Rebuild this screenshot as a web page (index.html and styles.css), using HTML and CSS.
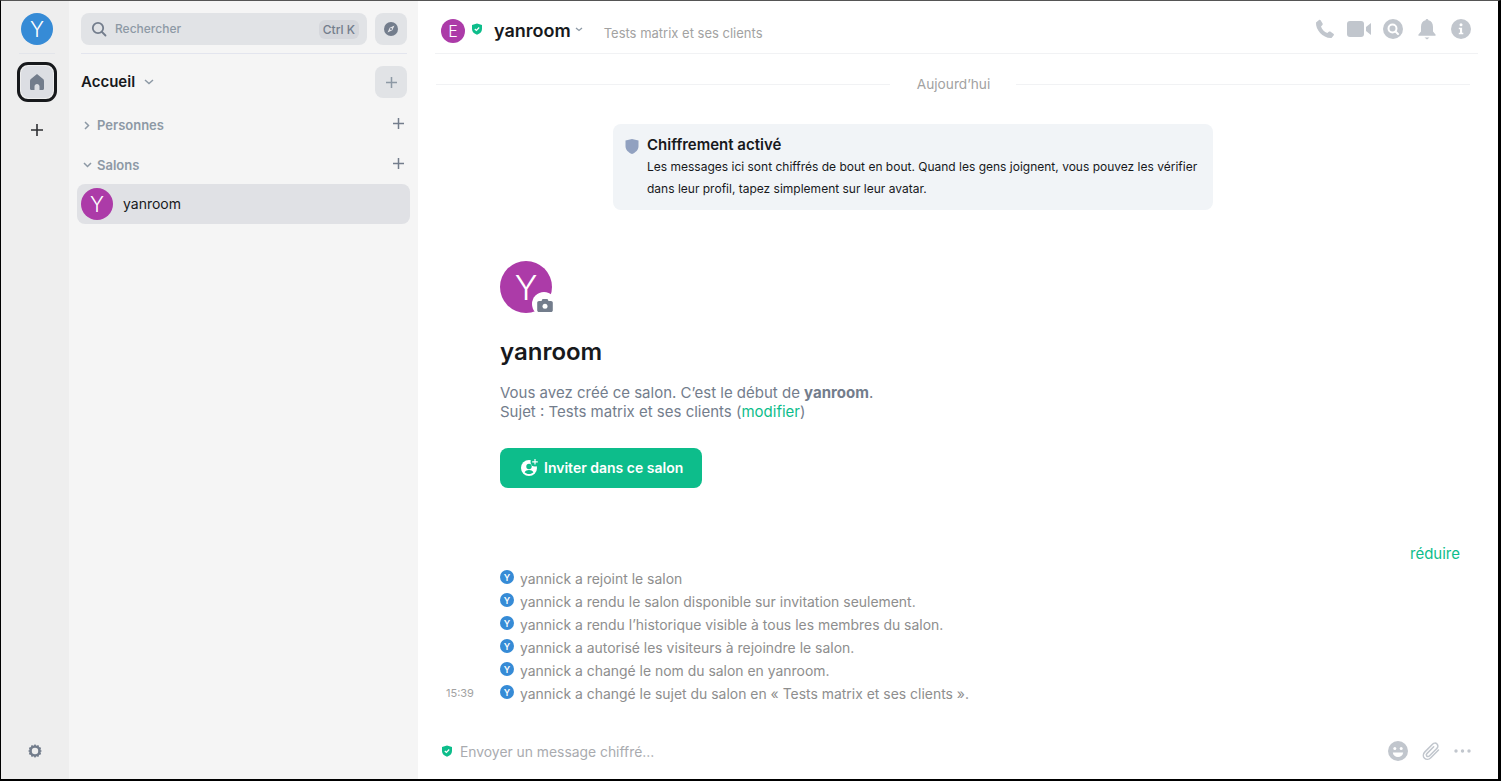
FILE: index.html
```html
<!DOCTYPE html>
<html lang="fr">
<head>
    <meta charset="UTF-8">
    <title>Element | yanroom</title>
    <link rel="stylesheet" href="styles.css">
</head>
<body>
<div class="app">
    <nav class="rail">
        <div class="avatar avatar-blue avatar-32 rail-me">Y</div>
        <div class="rail-sep"></div>
        <div class="rail-home">
            <div class="rail-home-inner">
                <svg width="14" height="16" viewBox="0 0 14 16"><path d="M7 0 .9 5C.3 5.500 0 6.100 0 6.900V14.500c0 .8.6 1.500 1.400 1.500H4.500v-3.500C4.500 11.100 5.600 10 7 10s2.500 1.100 2.500 2.500V16h3.100c.8 0 1.400-.7 1.400-1.500V6.900c0-.8-.3-1.400-.9-1.900z" fill="#737d8c"/></svg>
            </div>
        </div>
        <svg class="rail-add" width="14" height="14" viewBox="0 0 14 14"><path d="M7 1v12M1 7h12" stroke="#2e2f32" stroke-width="1.600"/></svg>
        <svg class="rail-gear" width="16" height="16" viewBox="0 0 16 16"><path d="M8 1l1.300 1.700 2.100-.6.700 2 2 .7-.6 2.100L15 8l-1.500 1.100.6 2.100-2 .7-.7 2-2.100-.6L8 15l-1.300-1.700-2.100.6-.7-2-2-.7.6-2.100L1 8l1.500-1.100-.6-2.100 2-.7.7-2 2.100.6z" fill="#737d8c"/><circle cx="8" cy="8" r="3.200" fill="#eeeeee"/></svg>
    </nav>

    <aside class="side">
        <div class="side-top">
            <div class="search">
                <svg width="16" height="16" viewBox="0 0 16 16"><circle cx="7" cy="7" r="5.200" fill="none" stroke="#737d8c" stroke-width="1.800"/><path d="M11 11l3.500 3.500" stroke="#737d8c" stroke-width="1.800" stroke-linecap="round"/></svg>
                <span class="search-label">Rechercher</span>
                <span class="kbd">Ctrl K</span>
            </div>
            <div class="square-btn">
                <svg width="14" height="14" viewBox="0 0 14 14"><circle cx="7" cy="7" r="7" fill="#737d8c"/><path d="M10.500 3.500 8.300 8.300 3.500 10.500 5.700 5.700z" fill="#e3e4e8"/><circle cx="7" cy="7" r="1" fill="#737d8c"/></svg>
            </div>
        </div>
        <div class="side-sep"></div>
        <div class="home-head">
            <span class="home-title">Accueil</span>
            <svg class="home-caret" width="10" height="6" viewBox="0 0 10 6"><path d="M1 1l4 3.500L9 1" fill="none" stroke="#8d99a5" stroke-width="1.500"/></svg>
            <div class="square-btn home-add">
                <svg width="11" height="11" viewBox="0 0 11 11"><path d="M5.500 0v11M0 5.500h11" stroke="#8d99a5" stroke-width="1.500"/></svg>
            </div>
        </div>
        <div class="section section-people">
            <svg width="6" height="9" viewBox="0 0 6 9"><path d="M1 1l3.500 3.500L1 8" fill="none" stroke="#8d99a5" stroke-width="1.500"/></svg>
            <span class="section-name">Personnes</span>
            <svg class="section-add" width="11" height="11" viewBox="0 0 11 11"><path d="M5.500 0v11M0 5.500h11" stroke="#737d8c" stroke-width="1.500"/></svg>
        </div>
        <div class="section section-rooms">
            <svg width="9" height="6" viewBox="0 0 9 6"><path d="M1 1l3.500 3.500L8 1" fill="none" stroke="#8d99a5" stroke-width="1.500"/></svg>
            <span class="section-name">Salons</span>
            <svg class="section-add" width="11" height="11" viewBox="0 0 11 11"><path d="M5.500 0v11M0 5.500h11" stroke="#737d8c" stroke-width="1.500"/></svg>
        </div>
        <div class="room-row">
            <div class="avatar avatar-purple avatar-32">Y</div>
            <span class="room-name">yanroom</span>
        </div>
    </aside>

    <main class="main">
        <header class="head">
            <div class="avatar avatar-purple avatar-24">E</div>
            <svg class="head-shield" width="12" height="12" viewBox="0 0 12 12"><path d="M6 .5 11 2v4c0 3-2.300 4.800-5 5.700C3.300 10.800 1 9 1 6V2z" fill="#0dbd8b"/><path d="M3.800 6l1.600 1.500 2.800-3" fill="none" stroke="#fff" stroke-width="1.200"/></svg>
            <span class="head-name">yanroom</span>
            <svg class="head-caret" width="8" height="5" viewBox="0 0 8 5"><path d="M1 1l3 2.500L7 1" fill="none" stroke="#8d99a5" stroke-width="1.300"/></svg>
            <span class="head-topic">Tests matrix et ses clients</span>
            <div class="head-icons">
                <svg width="20" height="20" viewBox="0 0 20 20"><path d="M1 3.500 4 1c.6-.4 1.200-.3 1.600.3l2 3.300c.3.500.2 1-.2 1.400L6 7.400c.8 2.700 3.400 5.500 6.300 6.700l1.500-1.400c.4-.4 1-.4 1.500-.1l3.100 2.200c.6.400.7 1.100.2 1.700L16.500 19C8 19.500 .5 11 1 3.500z" fill="#c1c6cd"/></svg>
                <svg width="24" height="16" viewBox="0 0 24 16"><rect x="0" y="0" width="17" height="16" rx="3" fill="#c1c6cd"/><path d="M19 6 24 2v12l-5-4z" fill="#c1c6cd"/></svg>
                <svg width="20" height="20" viewBox="0 0 20 20"><circle cx="10" cy="10" r="10" fill="#c1c6cd"/><circle cx="9.500" cy="9.500" r="4" fill="none" stroke="#fff" stroke-width="2"/><path d="M12.500 12.500 15 15" stroke="#fff" stroke-width="2" stroke-linecap="round"/></svg>
                <svg class="head-bell" width="18" height="21" viewBox="0 0 18 21"><path d="M9 0c.8 0 1.400.6 1.400 1.300C13.500 2 15 4.500 15 8v4.500l2.500 3c.4.500.1 1.300-.6 1.300H1.100c-.7 0-1-.8-.6-1.300l2.500-3V8c0-3.500 1.500-6 4.600-6.700C7.600.6 8.200 0 9 0z" fill="#c1c6cd"/><path d="M6.500 18.500h5L9 20.500z" fill="#c1c6cd"/></svg>
                <svg width="20" height="20" viewBox="0 0 20 20"><circle cx="10" cy="10" r="10" fill="#c1c6cd"/><circle cx="10" cy="5.800" r="1.500" fill="#fff"/><path d="M7.800 8.800h3.300v5h1.200v1.500H7.800v-1.500H9v-3.500H7.800z" fill="#fff"/></svg>
            </div>
        </header>

        <div class="timeline">
            <div class="date-sep">
                <span class="date-line"></span>
                <span class="date-text">Aujourd’hui</span>
                <span class="date-line"></span>
            </div>

            <div class="notice">
                <svg class="notice-shield" width="14" height="15" viewBox="0 0 14 15"><path d="M7 0 13.500 1.600V7c0 4-2.900 6.500-6.500 8C3.400 13.500.5 11 .5 7V1.600z" fill="#91a1c0"/></svg>
                <div>
                    <div class="notice-title">Chiffrement activé</div>
                    <div class="notice-text">Les messages ici sont chiffrés de bout en bout. Quand les gens joignent, vous pouvez les vérifier dans leur profil, tapez simplement sur leur avatar.</div>
                </div>
            </div>

            <section class="intro">
                <div class="intro-avatar">
                    <div class="avatar avatar-purple avatar-52">Y</div>
                    <div class="camera">
                        <svg width="16" height="13" viewBox="0 0 16 13"><path d="M5.500 0h5l1 2H14c1 0 1.800.8 1.800 1.800v7.400c0 1-.8 1.800-1.800 1.800H2c-1 0-1.800-.8-1.800-1.800V3.800C.2 2.800 1 2 2 2h2.500z" fill="#737d8c"/><circle cx="8" cy="7.300" r="2.500" fill="#fff"/></svg>
                    </div>
                </div>
                <h1 class="intro-name">yanroom</h1>
                <p class="intro-text">Vous avez créé ce salon. C’est le début de <b>yanroom</b>.<br>Sujet : Tests matrix et ses clients (<a class="link">modifier</a>)</p>
                <button class="invite">
                    <svg width="18" height="18" viewBox="0 0 18 18"><circle cx="8" cy="10" r="8" fill="#fff"/><circle cx="14" cy="4" r="4.500" fill="#0dbd8b"/><path d="M14 1v5.600M11.200 3.800h5.600" stroke="#fff" stroke-width="1.200"/><circle cx="8" cy="8.500" r="2.700" fill="#0dbd8b"/><path d="M3.600 14.200c.9-1.500 2.500-2.300 4.400-2.300s3.500.8 4.400 2.300c-1.100 1.100-2.700 1.800-4.400 1.800s-3.300-.7-4.400-1.800z" fill="#0dbd8b"/></svg>
                    Inviter dans ce salon
                </button>
            </section>

            <div class="collapse"><a class="link">réduire</a></div>

            <ul class="events">
                <li class="event"><span class="event-time"></span><span class="avatar avatar-blue avatar-14">Y</span><span>yannick a rejoint le salon</span></li>
                <li class="event"><span class="event-time"></span><span class="avatar avatar-blue avatar-14">Y</span><span>yannick a rendu le salon disponible sur invitation seulement.</span></li>
                <li class="event"><span class="event-time"></span><span class="avatar avatar-blue avatar-14">Y</span><span>yannick a rendu l’historique visible à tous les membres du salon.</span></li>
                <li class="event"><span class="event-time"></span><span class="avatar avatar-blue avatar-14">Y</span><span>yannick a autorisé les visiteurs à rejoindre le salon.</span></li>
                <li class="event"><span class="event-time"></span><span class="avatar avatar-blue avatar-14">Y</span><span>yannick a changé le nom du salon en yanroom.</span></li>
                <li class="event"><span class="event-time">15:39</span><span class="avatar avatar-blue avatar-14">Y</span><span>yannick a changé le sujet du salon en « Tests matrix et ses clients ».</span></li>
            </ul>
        </div>

        <footer class="composer">
            <svg width="12" height="12" viewBox="0 0 12 12"><path d="M6 .5 11 2v4c0 3-2.300 4.800-5 5.700C3.300 10.800 1 9 1 6V2z" fill="#0dbd8b"/><path d="M3.800 6l1.600 1.500 2.800-3" fill="none" stroke="#fff" stroke-width="1.200"/></svg>
            <span class="composer-text">Envoyer un message chiffré…</span>
            <div class="composer-icons">
                <svg width="20" height="20" viewBox="0 0 20 20"><circle cx="10" cy="10" r="10" fill="#c1c6cd"/><circle cx="6.800" cy="7.500" r="1.500" fill="#fff"/><circle cx="13.200" cy="7.500" r="1.500" fill="#fff"/><path d="M4.800 11.500h10.400c-.3 2.800-2.500 4.500-5.200 4.500s-4.900-1.700-5.200-4.500z" fill="#fff"/></svg>
                <svg width="20" height="20" viewBox="0 0 20 20"><path d="M17.500 9 9.800 16.800c-2 2-4.700 2-6.300.4s-1.600-4.300.4-6.300L11.500 3.200c1.400-1.400 3.300-1.400 4.500-.2s1.200 3.100-.2 4.500L8.300 15c-.7.700-1.800.8-2.500.1s-.6-1.800.1-2.500l6.800-6.800" fill="none" stroke="#c1c6cd" stroke-width="1.500" stroke-linecap="round"/></svg>
                <svg width="17" height="4" viewBox="0 0 17 4"><circle cx="2" cy="2" r="1.700" fill="#c1c6cd"/><circle cx="8.500" cy="2" r="1.700" fill="#c1c6cd"/><circle cx="15" cy="2" r="1.700" fill="#c1c6cd"/></svg>
            </div>
        </footer>
    </main>
</div>
</body>
</html>
```

FILE: styles.css
```css
* {
    box-sizing: border-box;
}

html, body {
    height: 100%;
}

body {
    margin: 0;
    font-family: Inter, 'Noto Sans', sans-serif;
    background-color: #fff;
    color: #17191c;
    overflow: hidden;
}

.app {
    display: flex;
    height: 781px;
    border-top: 1px solid #555;
    border-left: 1px solid #000;
    border-right: 3px solid #000;
    border-bottom: 2px solid #000;
}

.avatar {
    display: flex;
    align-items: center;
    justify-content: center;
    flex-shrink: 0;
    border-radius: 50%;
    color: #fff;
    font-weight: 300;
}

.avatar-blue {
    background-color: #368bd6;
}

.avatar-purple {
    background-color: #ac3ba8;
}

.avatar-32 {
    width: 32px;
    height: 32px;
    font-size: 21px;
}

.avatar-24 {
    width: 24px;
    height: 24px;
    font-size: 16px;
}

.avatar-52 {
    width: 52px;
    height: 52px;
    font-size: 34px;
}

.avatar-14 {
    width: 14px;
    height: 14px;
    font-size: 9px;
    font-weight: 600;
    margin-top: -3px;
}

/* rail */
.rail {
    width: 68px;
    flex-shrink: 0;
    display: flex;
    flex-direction: column;
    align-items: center;
    background-color: #eeeeee;
    position: relative;
    padding-top: 12px;
    padding-left: 4px;
}

.rail-me {
    margin-bottom: 8px;
}

.rail-sep {
    width: 36px;
    height: 1px;
    background-color: #e3e5ea;
}

.rail-home {
    width: 40px;
    height: 40px;
    margin-top: 8px;
    border: 3px solid #17191c;
    border-radius: 11px;
    background-color: #eeeeee;
    display: flex;
    align-items: center;
    justify-content: center;
}

.rail-home-inner {
    width: 32px;
    height: 32px;
    border-radius: 8px;
    background-color: #dcdee3;
    display: flex;
    align-items: center;
    justify-content: center;
}

.rail-add {
    margin-top: 21px;
}

.rail-gear {
    position: absolute;
    left: 26px;
    bottom: 20px;
}

/* room list */
.side {
    width: 349px;
    flex-shrink: 0;
    background-color: #f5f5f5;
    padding: 12px 8px 0 12px;
}

.side-top {
    display: flex;
    gap: 8px;
    width: 326px;
}

.search {
    flex: 1;
    height: 32px;
    border-radius: 8px;
    background-color: #e1e3e6;
    display: flex;
    align-items: center;
    padding: 0 8px 0 10px;
}

.search-label {
    margin-left: 8px;
    margin-top: -2px;
    font-size: 12px;
    font-weight: 500;
    color: #8d99a5;
}

.kbd {
    margin-left: auto;
    padding: 2px 4px;
    height: 19px;
    border-radius: 6px;
    background-color: #d5d7dc;
    font-size: 12px;
    font-weight: 500;
    line-height: 15px;
    color: #737d8c;
}

.square-btn {
    width: 32px;
    height: 32px;
    flex-shrink: 0;
    border-radius: 8px;
    background-color: #e1e3e6;
    display: flex;
    align-items: center;
    justify-content: center;
}

.side-sep {
    height: 1px;
    margin-top: 8px;
    width: 326px;
    background-color: #e3e5ee;
}

.home-head {
    display: flex;
    align-items: center;
    width: 326px;
    margin-top: 12px;
}

.home-title {
    font-size: 15px;
    font-weight: 600;
    line-height: 32px;
    color: #17191c;
}

.home-caret {
    margin-left: 9px;
}

.home-add {
    margin-left: auto;
}

.section {
    display: flex;
    align-items: center;
    height: 20px;
    width: 323px;
    padding-left: 2px;
}

.section-people {
    margin-top: 17px;
}

.section-rooms {
    margin-top: 20px;
}

.section-people svg:first-child {
    margin-left: 1px;
    margin-right: 1px;
}

.section-name {
    margin-left: 6px;
    font-size: 13px;
    font-weight: 600;
    color: #8d99a5;
}

.section-rooms .section-name {
    margin-left: 5px;
}

.section-add {
    margin-left: auto;
    margin-top: -3px;
}

.room-row {
    display: flex;
    align-items: center;
    height: 40px;
    width: 333px;
    margin-top: 9px;
    margin-left: -4px;
    padding-left: 4px;
    border-radius: 8px;
    background-color: #e0e1e5;
}

.room-name {
    margin-left: 10px;
    margin-top: -2px;
    font-size: 14px;
    color: #17191c;
}

/* main */
.main {
    flex: 1;
    min-width: 0;
    display: flex;
    flex-direction: column;
    background-color: #fff;
}

.head {
    display: flex;
    align-items: center;
    height: 53px;
    margin-left: 17px;
    margin-right: 20px;
    padding-left: 6px;
    padding-top: 7px;
    border-bottom: 1px solid #f1f2f4;
}

.head-shield {
    margin-left: 6px;
    margin-top: -3px;
}

.head-name {
    margin-left: 11px;
    font-size: 18px;
    font-weight: 600;
    color: #17191c;
}

.head-caret {
    margin-left: 4px;
    margin-top: -3px;
}

.head-topic {
    margin-left: 21px;
    margin-top: 5px;
    font-size: 13px;
    color: #a2a2a2;
}

.head-icons {
    margin-left: auto;
    display: flex;
    align-items: center;
    gap: 12px;
    margin-right: 7px;
    margin-top: -3px;
}

.head-bell {
    margin: 0 3px;
}

.timeline {
    flex: 1;
    min-height: 0;
    padding-left: 18px;
    padding-right: 20px;
}

.date-sep {
    display: flex;
    align-items: center;
    height: 30px;
    margin-top: 15px;
    margin-right: 8px;
}

.date-line {
    flex: 1;
    height: 1px;
    background-color: #f1f2f4;
}

.date-text {
    padding: 0 26px 0 27px;
    font-size: 13.7px;
    color: #a2a2a2;
}

.notice {
    display: flex;
    gap: 8px;
    width: 600px;
    height: 86px;
    margin-top: 25px;
    margin-left: 177px;
    padding: 12px 12px;
    border-radius: 8px;
    background-color: #f1f4f7;
}

.notice-shield {
    margin-top: 3px;
    flex-shrink: 0;
}

.notice-title {
    font-size: 15px;
    font-weight: 600;
    line-height: 18px;
    color: #17191c;
}

.notice-text {
    font-size: 12px;
    line-height: 22px;
    margin-top: 2px;
    color: #17191c;
}

.intro {
    margin-left: 64px;
    margin-top: 51px;
}

.intro-avatar {
    position: relative;
    width: 52px;
    height: 52px;
}

.camera {
    position: absolute;
    right: -4px;
    bottom: -3px;
    width: 24px;
    height: 24px;
    border-radius: 50%;
    background-color: #fff;
    display: flex;
    align-items: center;
    justify-content: center;
    padding-left: 1px;
    padding-top: 2px;
}

.intro-name {
    margin: 24px 0 0;
    font-size: 24px;
    font-weight: 600;
    line-height: 29px;
    color: #17191c;
}

.intro-text {
    margin: 17px 0 0;
    font-size: 15px;
    line-height: 19px;
    color: #737d8c;
}

.link {
    color: #0dbd8b;
}

.invite {
    display: flex;
    align-items: center;
    gap: 5px;
    width: 202px;
    height: 40px;
    margin-top: 27px;
    padding: 0 0 2px 21px;
    border: none;
    border-radius: 8px;
    background-color: #0dbd8b;
    color: #fff;
    font-family: inherit;
    font-size: 14px;
    font-weight: 600;
}

.collapse {
    margin-top: 57px;
    text-align: right;
    font-size: 15px;
    line-height: 18px;
    padding-right: 18px;
}

.events {
    list-style: none;
    margin: 4px 0 0;
    padding: 0;
}

.event {
    display: flex;
    align-items: center;
    height: 23px;
    font-size: 13.94px;
    color: #8e8e8e;
}

.event-time {
    width: 64px;
    padding-left: 10px;
    margin-top: -2px;
    font-size: 11px;
    color: #a2a2a2;
    flex-shrink: 0;
}

.event .avatar-14 {
    margin-right: 6px;
}

.composer {
    display: flex;
    align-items: center;
    height: 56px;
    padding: 0 27px 0 23px;
}

.composer-text {
    margin-left: 7px;
    margin-top: 2px;
    font-size: 13.86px;
    color: #a9abaf;
}

.composer-icons {
    margin-left: auto;
    display: flex;
    align-items: center;
    gap: 13px;
}
```
